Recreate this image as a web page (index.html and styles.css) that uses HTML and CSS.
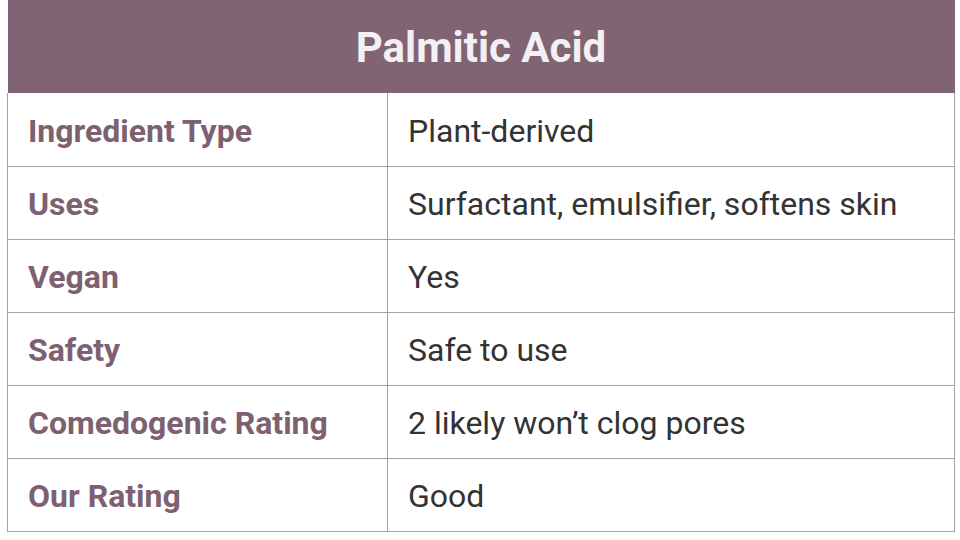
FILE: index.html
```html
<!DOCTYPE html>
<html>
<head>
<meta charset="utf-8">
<link rel="stylesheet" href="styles.css">
</head>
<body>
<div class="wrap">
  <table class="info">
    <colgroup>
      <col class="col-label">
      <col class="col-value">
    </colgroup>
    <thead>
      <tr><th colspan="2" class="title">Palmitic Acid</th></tr>
    </thead>
    <tbody>
      <tr><td class="label">Ingredient Type</td><td class="value">Plant-derived</td></tr>
      <tr><td class="label">Uses</td><td class="value">Surfactant, emulsifier, softens skin</td></tr>
      <tr><td class="label">Vegan</td><td class="value">Yes</td></tr>
      <tr><td class="label">Safety</td><td class="value">Safe to use</td></tr>
      <tr><td class="label">Comedogenic Rating</td><td class="value">2 likely won’t clog pores</td></tr>
      <tr><td class="label">Our Rating</td><td class="value">Good</td></tr>
    </tbody>
  </table>
</div>
</body>
</html>
```
FILE: styles.css
```css
html, body {
  margin: 0;
  padding: 0;
  background: #ffffff;
}
.wrap {
  padding: 0 5px 0 7px;
}
.info {
  width: 948px;
  border-collapse: collapse;
  font-family: Roboto, "Liberation Sans", sans-serif;
  table-layout: fixed;
}
.col-label {
  width: 380px;
}
.title {
  background: #806474;
  color: #f3eff3;
  font-size: 42px;
  font-weight: 700;
  height: 93px;
  padding: 2px 0 0 0;
  box-sizing: border-box;
  text-align: center;
  vertical-align: middle;
}
.info td {
  border: 1px solid #a3a3a3;
  height: 73px;
  box-sizing: border-box;
  padding: 3px 0 0 20px;
  font-size: 32px;
  vertical-align: middle;
}
.info tbody tr:first-child td {
  border-top: none;
}
.label {
  color: #7d6170;
  font-weight: 700;
}
.value {
  color: #333333;
}
```
